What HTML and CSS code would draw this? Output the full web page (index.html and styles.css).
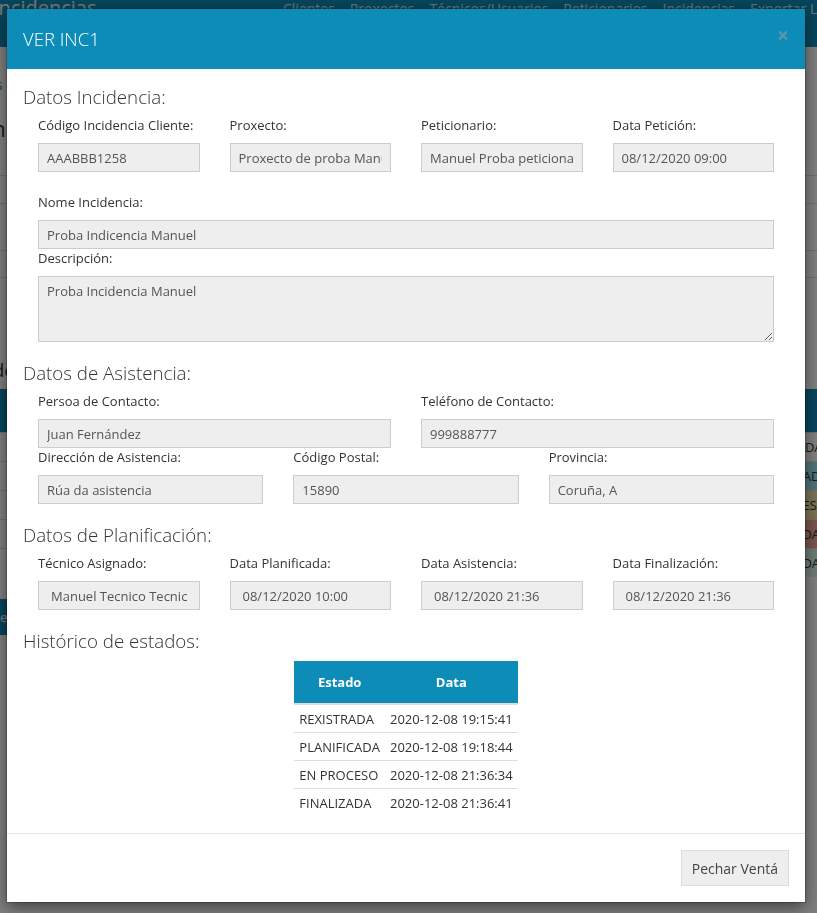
FILE: index.html
```html
<!DOCTYPE html>
<html lang="gl">
<head>
<meta charset="utf-8">
<title>VER INC1</title>
<link rel="stylesheet" href="styles.css">
</head>
<body>
<div class="page">
  <nav class="navbar">
    <span class="brand">Incidencias</span>
    <ul class="nav">
      <li>Clientes</li>
      <li>Proxectos</li>
      <li>Técnicos/Usuarios</li>
      <li>Peticionarios</li>
      <li>Incidencias</li>
      <li>Exportar Listado</li>
    </ul>
  </nav>
  <div class="content">
    <div class="crumb">Incidencias</div>
    <h1 class="page-title">Xestión</h1>
    <div class="filters">
      <div class="filter-row r1">Filtros</div>
      <div class="filter-row r2">Cliente</div>
      <div class="filter-row r3">Estado</div>
    </div>
    <div class="caption">Listaxe de incidencias</div>
    <table class="list">
      <thead>
        <tr><th class="c1">Código</th><th>Nome</th><th>Cliente</th><th>Proxecto</th><th>Data</th><th class="cst">Estado</th></tr>
      </thead>
      <tbody>
        <tr><td>INC1</td><td>Proba</td><td>Cliente</td><td>Proxecto</td><td>08/12/2020</td><td class="st">REXISTRADA</td></tr>
        <tr><td>INC2</td><td>Proba</td><td>Cliente</td><td>Proxecto</td><td>08/12/2020</td><td class="st st-info">PLANIFICADA</td></tr>
        <tr><td>INC3</td><td>Proba</td><td>Cliente</td><td>Proxecto</td><td>08/12/2020</td><td class="st st-warn">EN PROCESO</td></tr>
        <tr><td>INC4</td><td>Proba</td><td>Cliente</td><td>Proxecto</td><td>08/12/2020</td><td class="st st-danger">FINALIZADA</td></tr>
        <tr><td>INC5</td><td>Proba</td><td>Cliente</td><td>Proxecto</td><td>08/12/2020</td><td class="st st-ok">FINALIZADA</td></tr>
      </tbody>
    </table>
    <div class="new-btn">Nova incidencia</div>
  </div>
</div>

<div class="backdrop"></div>

<div class="modal">
  <div class="modal-dialog">
    <div class="modal-header">
      <h4 class="modal-title">VER INC1</h4>
      <span class="close">×</span>
    </div>
    <div class="modal-body">
      <h4 class="section first">Datos Incidencia:</h4>
      <div class="row cols-4 gap-after">
        <div class="field"><label>Código Incidencia Cliente:</label><input class="ctl" readonly value="AAABBB1258"></div>
        <div class="field"><label>Proxecto:</label><input class="ctl" readonly value="Proxecto de proba Manuel"></div>
        <div class="field"><label>Peticionario:</label><input class="ctl" readonly value="Manuel Proba peticionario"></div>
        <div class="field"><label>Data Petición:</label><input class="ctl" readonly value="08/12/2020 09:00"></div>
      </div>
      <div class="row cols-1">
        <div class="field"><label>Nome Incidencia:</label><input class="ctl" readonly value="Proba Indicencia Manuel"></div>
      </div>
      <div class="row cols-1">
        <div class="field"><label>Descripción:</label><textarea class="ctl area" readonly>Proba Incidencia Manuel</textarea></div>
      </div>

      <h4 class="section">Datos de Asistencia:</h4>
      <div class="row cols-2">
        <div class="field"><label>Persoa de Contacto:</label><input class="ctl" readonly value="Juan Fernández"></div>
        <div class="field"><label>Teléfono de Contacto:</label><input class="ctl" readonly value="999888777"></div>
      </div>
      <div class="row cols-3">
        <div class="field"><label>Dirección de Asistencia:</label><input class="ctl" readonly value="Rúa da asistencia"></div>
        <div class="field"><label>Código Postal:</label><input class="ctl" readonly value="15890"></div>
        <div class="field"><label>Provincia:</label><input class="ctl" readonly value="Coruña, A"></div>
      </div>

      <h4 class="section">Datos de Planificación:</h4>
      <div class="row cols-4">
        <div class="field"><label>Técnico Asignado:</label><input class="ctl pad-l" readonly value="Manuel Tecnico Tecnico"></div>
        <div class="field"><label>Data Planificada:</label><input class="ctl pad-l" readonly value="08/12/2020 10:00"></div>
        <div class="field"><label>Data Asistencia:</label><input class="ctl pad-l" readonly value="08/12/2020 21:36"></div>
        <div class="field"><label>Data Finalización:</label><input class="ctl pad-l" readonly value="08/12/2020 21:36"></div>
      </div>

      <h4 class="section">Histórico de estados:</h4>
      <table class="history">
        <thead>
          <tr><th>Estado</th><th>Data</th></tr>
        </thead>
        <tbody>
          <tr><td>REXISTRADA</td><td>2020-12-08 19:15:41</td></tr>
          <tr><td>PLANIFICADA</td><td>2020-12-08 19:18:44</td></tr>
          <tr><td>EN PROCESO</td><td>2020-12-08 21:36:34</td></tr>
          <tr><td>FINALIZADA</td><td>2020-12-08 21:36:41</td></tr>
        </tbody>
      </table>
    </div>
    <div class="modal-footer">
      <button class="btn" type="button">Pechar Ventá</button>
    </div>
  </div>
</div>
</body>
</html>
```
FILE: styles.css
```css
* { box-sizing: border-box; }

html, body {
  margin: 0;
  height: 100%;
}

body {
  font-family: "Open Sans", "Liberation Sans", sans-serif;
  font-size: 13px;
  color: #333;
  background: #fff;
  overflow: hidden;
}

/* ---------- background page ---------- */
.page { width: 817px; }

.navbar {
  height: 47px;
  background: #0d8bb8;
  display: flex;
  align-items: flex-start;
  overflow: hidden;
  white-space: nowrap;
}

.brand {
  flex: none;
  width: 290px;
  margin: -2px 0 0 -7px;
  font-size: 20px;
  line-height: 20px;
  color: #f0f0f0;
}

.nav {
  list-style: none;
  margin: 0;
  padding: 2px 0 0;
  display: flex;
  gap: 15px;
  font-size: 14px;
  line-height: 14px;
  color: #d8e8ee;
}

.content {
  margin-left: -70px;
  width: 957px;
}

.crumb {
  margin-top: 28px;
  font-size: 14px;
  line-height: 20px;
  color: #337ab7;
}

.page-title {
  margin: 18px 0 0;
  font-size: 22px;
  font-weight: 400;
  line-height: 30px;
  color: #333;
}

.filters { margin-top: 32px; }

.filter-row {
  border-top: 1px solid #ddd;
  padding-left: 70px;
  color: #fff;
}
.filter-row.r1 { height: 28px; }
.filter-row.r2 { height: 47px; }
.filter-row.r3 { height: 28px; border-bottom: 1px solid #ddd; }

.caption {
  margin-top: 81px;
  font-size: 18px;
  line-height: 22px;
  color: #333;
}

.list {
  margin-top: 8px;
  width: 957px;
  border-collapse: collapse;
}

.list th {
  height: 43px;
  background: #0d8bb8;
  color: #fff;
  text-align: left;
  padding: 0 8px;
}

.list th.c1 { width: 90px; }
.list th.cst { width: 144px; }

.list td {
  height: 29px;
  padding: 0 5px;
  border-top: 1px solid #ddd;
  white-space: nowrap;
}

.st-info { background: #9ee6f3; }
.st-warn { background: #f7e6aa; }
.st-danger { background: #f2aaa0; }
.st-ok { background: #dcf6ea; }

.new-btn {
  margin-top: 22px;
  width: 110px;
  height: 36px;
  line-height: 36px;
  background: #0d8bb8;
  color: #fff;
  text-align: right;
  padding-right: 8px;
}

/* ---------- modal ---------- */
.backdrop {
  position: fixed;
  inset: 0;
  background: rgba(0, 0, 0, 0.5);
}

.modal {
  position: fixed;
  inset: 0;
  padding: 9px 0 0 7px;
}

.modal-dialog {
  width: 798px;
  background: #fff;
  box-shadow: 0 0 0 1px rgba(0, 0, 0, 0.2), 0 5px 15px rgba(0, 0, 0, 0.5);
}

.modal-header {
  height: 60px;
  background: #0e8cb8;
  padding: 0 16px;
  display: flex;
  align-items: center;
  justify-content: space-between;
}

.modal-title {
  margin: 0;
  font-size: 18.5px;
  font-weight: 300;
  line-height: 20px;
  color: #fff;
}

.close {
  margin-top: -8px;
  font-size: 21px;
  font-weight: 700;
  line-height: 21px;
  color: #5b95aa;
}

.modal-body {
  padding: 18px 16px 17px;
}

.section {
  margin: 21px 0 9px;
  font-size: 18.7px;
  font-weight: 300;
  line-height: 20px;
  color: #333;
}

.section.first { margin-top: 0; }

.row {
  display: grid;
  column-gap: 30px;
  padding: 0 15px;
}

.cols-1 { grid-template-columns: 1fr; }
.cols-2 { grid-template-columns: repeat(2, 1fr); }
.cols-3 { grid-template-columns: repeat(3, 1fr); }
.cols-4 { grid-template-columns: repeat(4, 1fr); }

.gap-after { margin-bottom: 21px; }

.field { min-width: 0; }

.field label {
  display: block;
  font-size: 13px;
  line-height: 18px;
  margin-bottom: 9px;
  color: #333;
}

.ctl {
  display: block;
  width: 100%;
  height: 29px;
  margin: 0;
  padding: 0 8px;
  border: 1px solid #ccc;
  border-radius: 0;
  background: #eee;
  color: #555;
  font-family: "Open Sans", "Liberation Sans", sans-serif;
  font-size: 13px;
  outline: none;
}

.ctl.pad-l { padding: 0 12px; }

.ctl.area {
  height: 66px;
  padding: 5px 8px;
  line-height: 18px;
  resize: vertical;
}

.history {
  margin: 10px auto 0;
  border-collapse: collapse;
  font-size: 13px;
}

.history th {
  background: #0e8cb8;
  color: #fff;
  font-weight: 700;
  line-height: 18px;
  padding: 12px 5px;
  text-align: center;
  border-bottom: 2px solid #ddd;
}

.history td {
  padding: 4.5px 5px;
  line-height: 18px;
  border-top: 1px solid #ddd;
  white-space: nowrap;
  color: #333;
}

.history tbody tr:first-child td { border-top: 0; }

.modal-footer {
  border-top: 1px solid #e5e5e5;
  padding: 16px;
  display: flex;
  justify-content: flex-end;
}

.btn {
  height: 36px;
  padding: 0 10px;
  border: 1px solid #ddd;
  border-radius: 0;
  background: #eee;
  color: #444;
  font-family: "Open Sans", "Liberation Sans", sans-serif;
  font-size: 14px;
}
```
